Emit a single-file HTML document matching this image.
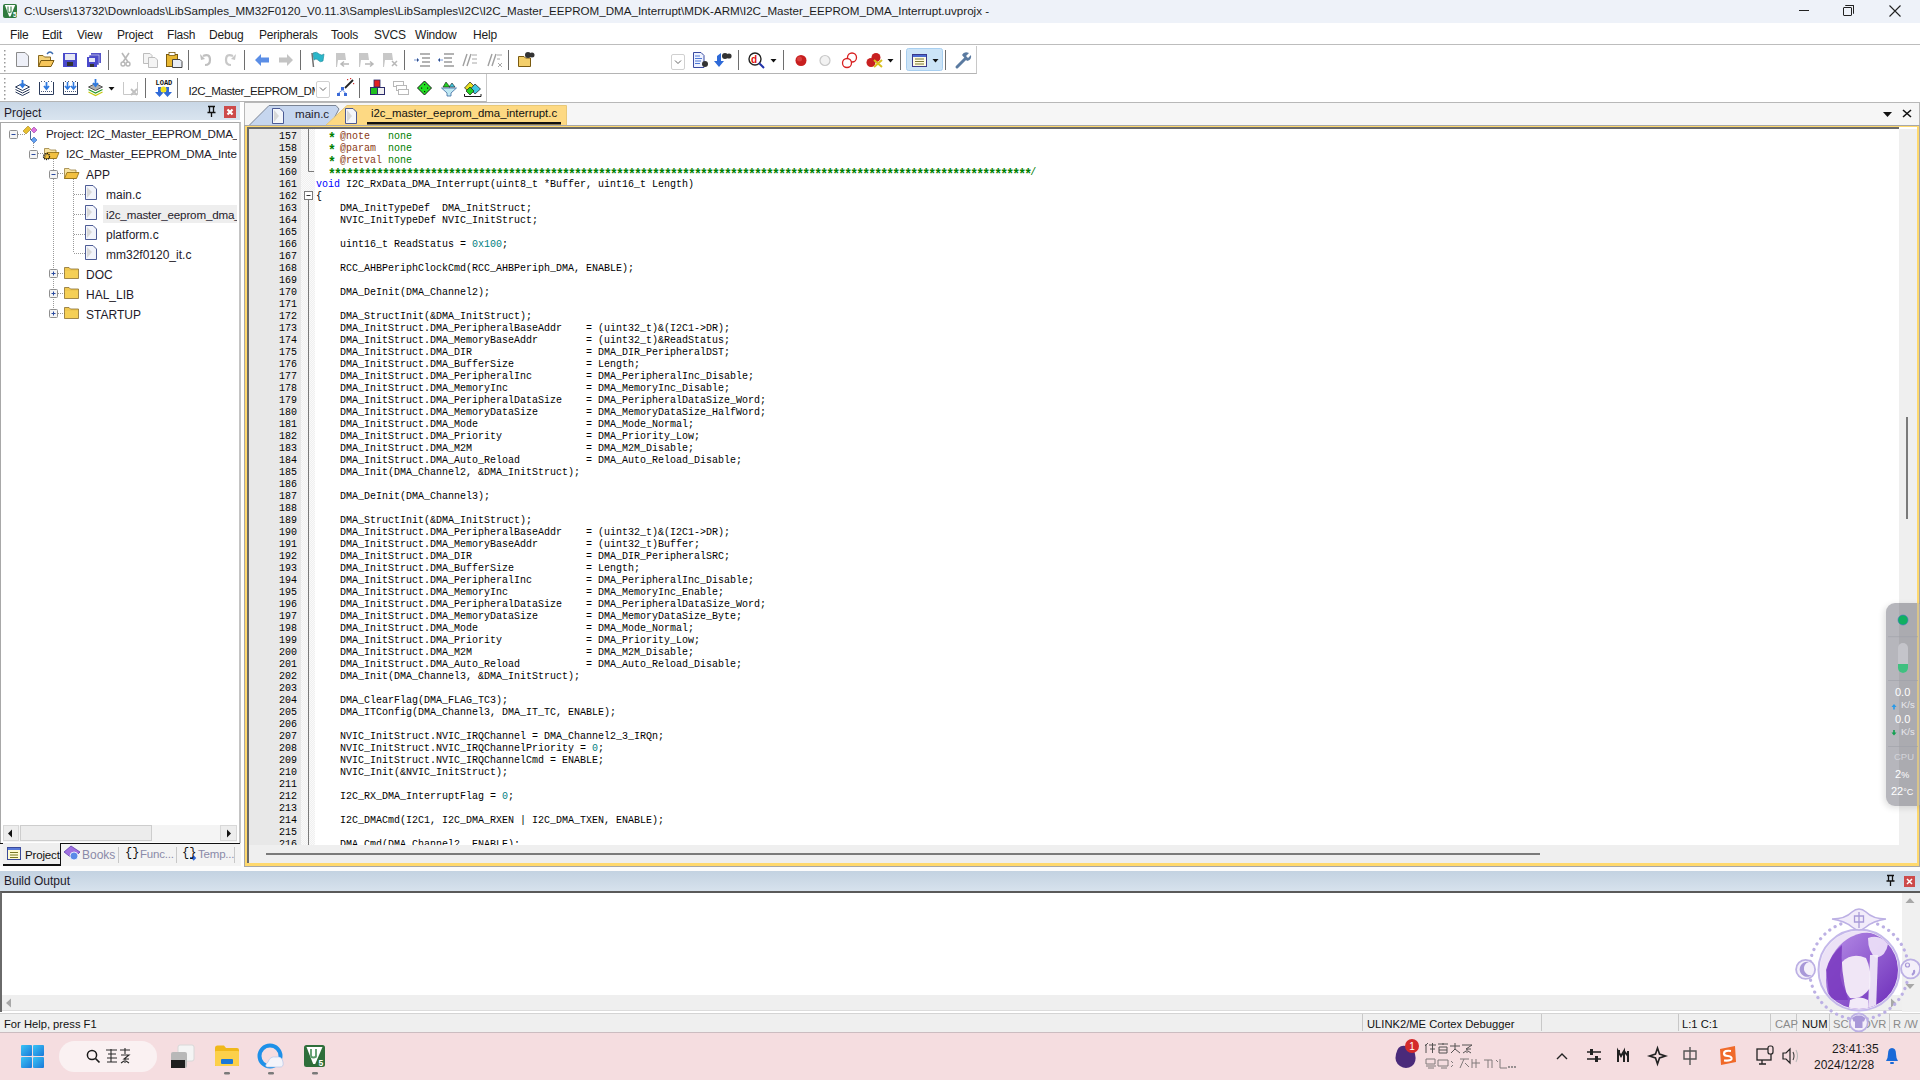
<!DOCTYPE html>
<html><head><meta charset="utf-8">
<style>
*{margin:0;padding:0;box-sizing:border-box}
html,body{width:1920px;height:1080px;overflow:hidden;background:#fff;font-family:"Liberation Sans",sans-serif;font-size:11.5px;color:#1b1b1b}
.a{position:absolute}
#title{left:0;top:0;width:1920px;height:23px;background:#eef2f9}
#title .t{left:24px;top:4px;font-size:11.6px;white-space:nowrap;color:#1c1c1c}
#menu{left:0;top:23px;width:1920px;height:22px;background:#fff;border-bottom:1px solid #bdbdbd}
#menu span{position:absolute;top:5px;font-size:12px;letter-spacing:-0.2px;color:#1b1b1b}
.tb{background:#fff}
.sep{position:absolute;width:1px;background:#7a7a7a}
.grip{position:absolute;width:2px;border-left:2px dotted #a0a0a0}
#codeclip{left:249px;top:129px;width:1650px;height:716px;overflow:hidden}
#code{left:66.6px;top:1px;font-family:"Liberation Mono",monospace;font-size:11.5px;line-height:12px;white-space:pre;transform:scaleX(0.8696);transform-origin:0 0;color:#000}
#nums{left:0px;top:1px;width:48px;text-align:right;font-family:"Liberation Mono",monospace;font-size:11.5px;line-height:12px;color:#000;transform:scaleX(0.8696);transform-origin:100% 0}
.cl{height:12px}
.cm{color:#008000}.st{font-size:15px;letter-spacing:-2.1px;position:relative;top:3.5px;font-weight:bold}.tg{color:#8b3a16}.kw{color:#0000ff}.nm{color:#008080}
</style></head><body>
<!-- title bar -->
<div id="title" class="a">
  <svg class="a" style="left:3px;top:4px" width="14" height="14" viewBox="0 0 14 14"><rect x="0" y="0" width="14" height="14" rx="2" fill="#2f7a3e"/><path d="M1.8 1 H12.2 L7.5 12.5 H6.2Z" fill="#fff"/><path d="M5 2.5 V7 Q5 8.5 6.5 8.5 Q8 8.5 8 7 V2.5 M8 2.5 V8.5" stroke="#5a9a68" stroke-width="1.3" fill="none"/><text x="10" y="13.3" font-size="6.5" fill="#fff" font-family="Liberation Sans" font-weight="bold">5</text></svg>
  <div class="a t">C:\Users\13732\Downloads\LibSamples_MM32F0120_V0.11.3\Samples\LibSamples\I2C\I2C_Master_EEPROM_DMA_Interrupt\MDK-ARM\I2C_Master_EEPROM_DMA_Interrupt.uvprojx -</div>
  <div class="a" style="left:1799px;top:10px;width:10px;height:1px;background:#222"></div>
  <div class="a" style="left:1843px;top:7px;width:9px;height:9px;border:1px solid #222;border-radius:1px"></div>
  <div class="a" style="left:1845px;top:5px;width:9px;height:9px;border-top:1px solid #222;border-right:1px solid #222;border-radius:1px"></div>
  <svg class="a" style="left:1889px;top:5px" width="12" height="12"><path d="M0.5 0.5 L11.5 11.5 M11.5 0.5 L0.5 11.5" stroke="#222" stroke-width="1.1"/></svg>
</div>
<!-- menu -->
<div id="menu" class="a">
  <span style="left:10px">File</span><span style="left:42px">Edit</span><span style="left:77px">View</span><span style="left:117px">Project</span><span style="left:167px">Flash</span><span style="left:209px">Debug</span><span style="left:259px">Peripherals</span><span style="left:331px">Tools</span><span style="left:374px">SVCS</span><span style="left:415px">Window</span><span style="left:473px">Help</span>
</div>
<!-- toolbar 1 -->
<div class="a" style="left:0;top:46px;width:977px;height:28px;border-right:1px solid #c8c8c8;border-bottom:1px solid #b4b4b4;background:#fff"></div>
<div class="a" style="left:0;top:74px;width:487px;height:28px;border-right:1px solid #c8c8c8;border-bottom:1px solid #b4b4b4;background:#fff"></div>
<svg class="a" style="left:0;top:46px" width="980" height="56">
 <g fill="#9a9a9a">
  <rect x="4" y="4" width="1.5" height="1.5"/><rect x="4" y="8" width="1.5" height="1.5"/><rect x="4" y="12" width="1.5" height="1.5"/><rect x="4" y="16" width="1.5" height="1.5"/><rect x="4" y="20" width="1.5" height="1.5"/><rect x="4" y="24" width="1.5" height="1.5"/>
  <rect x="4" y="32" width="1.5" height="1.5"/><rect x="4" y="36" width="1.5" height="1.5"/><rect x="4" y="40" width="1.5" height="1.5"/><rect x="4" y="44" width="1.5" height="1.5"/><rect x="4" y="48" width="1.5" height="1.5"/><rect x="4" y="52" width="1.5" height="1.5"/>
 </g>
 <!-- separators row1 -->
 <g fill="#6e6e6e">
  <rect x="108" y="4" width="1" height="20"/><rect x="188" y="4" width="1" height="20"/><rect x="244" y="4" width="1" height="20"/><rect x="300" y="4" width="1" height="20"/><rect x="404" y="4" width="1" height="20"/><rect x="508" y="4" width="1" height="20"/><rect x="738" y="4" width="1" height="20"/><rect x="783" y="4" width="1" height="20"/><rect x="900" y="4" width="1" height="20"/><rect x="945" y="4" width="1" height="20"/>
  <rect x="145" y="32" width="1" height="20"/><rect x="177" y="32" width="1" height="20"/><rect x="359" y="32" width="1" height="20"/>
 </g>
 <!-- new file -->
 <path d="M16.5 6.5 H25 L28.5 10 V20.5 H16.5Z" fill="#eef0f8" stroke="#8a8a8a"/>
 <!-- open -->
 <path d="M38.5 9.5 H43 L44.5 11 H50.5 V20.5 H38.5Z" fill="#f3d27a" stroke="#8a6a20"/>
 <path d="M38.5 20.5 L41 14.5 H54 L51 20.5Z" fill="#f7c65a" stroke="#7a5a10"/>
 <path d="M47 8 Q50 4 53 8" fill="none" stroke="#3a6ab0" stroke-width="1.3"/>
 <!-- save -->
 <rect x="63" y="7" width="14" height="14" fill="#4a4acb"/><rect x="65" y="8" width="10" height="6" fill="#e6e8f4"/><rect x="67" y="16" width="6" height="4" fill="#333"/>
 <!-- save all -->
 <rect x="91" y="7" width="10" height="10" fill="#5555c8"/><rect x="89" y="9" width="10" height="10" fill="#4f4fc8" stroke="#fff" stroke-width="0.5"/><rect x="87" y="11" width="10" height="10" fill="#4a4acb"/><rect x="89" y="12" width="6" height="4" fill="#e6e8f4"/><rect x="90" y="18" width="4" height="3" fill="#333"/>
 <!-- cut (gray) -->
 <path d="M122 7 L128 16 M129 7 L123 16" stroke="#b8b8b8" stroke-width="1.6"/><circle cx="123" cy="18" r="2" fill="none" stroke="#b8b8b8" stroke-width="1.4"/><circle cx="128" cy="18" r="2" fill="none" stroke="#b8b8b8" stroke-width="1.4"/>
 <!-- copy (gray) -->
 <path d="M143.5 7.5 H150 L152 9.5 V17.5 H143.5Z" fill="#f4f4f4" stroke="#bdbdbd"/><path d="M148.5 11.5 H155 L157.5 14 V21.5 H148.5Z" fill="#f4f4f4" stroke="#bdbdbd"/>
 <!-- paste -->
 <rect x="166.5" y="8.5" width="11" height="12" fill="#e8b732" stroke="#7a5a10"/><rect x="169" y="6.5" width="6" height="3" fill="#fff" stroke="#7a5a10" stroke-width="0.8"/><path d="M172.5 13.5 H180 L182 15.5 V21.5 H172.5Z" fill="#e9edf5" stroke="#444"/>
 <!-- undo redo gray -->
 <path d="M203 10 Q210 7 210 14 Q210 19 205 19" fill="none" stroke="#c0c0c0" stroke-width="2.2"/><path d="M200 8 L205 13 L201 14Z" fill="#c0c0c0"/>
 <path d="M233 10 Q226 7 226 14 Q226 19 231 19" fill="none" stroke="#c8c8c8" stroke-width="2.2"/><path d="M236 8 L231 13 L235 14Z" fill="#c8c8c8"/>
 <!-- back / forward -->
 <path d="M255 14 L261 8 V11.5 H269 V16.5 H261 V20Z" fill="#5b8ee6"/>
 <path d="M293 14 L287 8 V11.5 H279 V16.5 H287 V20Z" fill="#c4c4c4"/>
 <!-- flag -->
 <path d="M312 7 L313.5 21" stroke="#707070" stroke-width="1.5"/><path d="M313 7 Q317 5 319 8 Q322 10 324 8 L323 15 Q320 17 318 14 Q316 12 314 14Z" fill="#2bb6c9" stroke="#1a8a9a" stroke-width="0.6"/>
 <!-- bookmark grays -->
 <g fill="#c8c8c8"><path d="M336 7 H345 L346 14 H338 L337 21 H336Z"/><path d="M359 7 H368 L369 14 H361 L360 21 H359Z"/><path d="M383 7 H392 L393 14 H385 L384 21 H383Z"/></g>
 <g stroke="#b8b8b8" stroke-width="1.5" fill="none"><path d="M349 18 H341 M344 15.5 L341 18 L344 20.5"/><path d="M365 18 H373 M370 15.5 L373 18 L370 20.5"/><path d="M392 15 L397 20 M397 15 L392 20"/></g>
 <!-- indent / unindent / comment -->
 <g stroke="#9a9a9a" stroke-width="1.3"><path d="M420 8 H430 M422 12 H430 M422 16 H430 M420 20 H430"/><path d="M444 8 H454 M444 12 H452 M444 16 H452 M444 20 H454"/></g>
 <g stroke="#7a9ad8" stroke-width="1"><path d="M414 14 H419 M417 12 L419 14 L417 16"/><path d="M443 14 H438 M440 12 L438 14 L440 16"/></g>
 <g stroke="#a0a0a0" stroke-width="1.4"><path d="M463 20 L467 8 M467 20 L471 8"/><path d="M488 20 L492 8 M492 20 L496 8"/></g>
 <g stroke="#a8a8a8" stroke-width="1"><path d="M472 9 H477 M472 13 H477 M472 17 H477"/><path d="M497 9 H502 M497 13 H500 M498 17 L502 21 M502 17 L498 21"/></g>
 <!-- find in files -->
 <path d="M518.5 10.5 H524 L525.5 12 H530.5 V20.5 H518.5Z" fill="#f4cf6a" stroke="#7a5a10"/><circle cx="528" cy="9" r="3" fill="#333"/><circle cx="532" cy="9" r="2.5" fill="#333"/>
 <!-- combo dropdown -->
 <rect x="671.5" y="8.5" width="13" height="15" rx="1.5" fill="#fff" stroke="#d0d0d0"/><path d="M675 14.5 L678 17.5 L681 14.5" fill="none" stroke="#555" stroke-width="0.9"/>
 <!-- find doc -->
 <path d="M693.5 6.5 H701 L704 9.5 V21.5 H693.5Z" fill="#eef2ff" stroke="#3a4aa0"/><g stroke="#3a6ad0" stroke-width="0.9"><path d="M695 10 H700 M695 12.5 H702 M695 15 H701 M695 17.5 H700"/></g><circle cx="705" cy="18" r="3" fill="#333"/>
 <!-- find with arrow -->
 <path d="M721 7 V15 H724 L719 21 L714 15 H717 V10Z" fill="#2e6ad8"/><circle cx="725" cy="10" r="3" fill="#333"/><circle cx="729" cy="10" r="2.6" fill="#333"/>
 <!-- debug magnifier -->
 <circle cx="755" cy="13" r="6" fill="#fff" stroke="#222" stroke-width="1.4"/><path d="M759 17 L764 22" stroke="#2233aa" stroke-width="2"/><text x="751" y="17" font-size="10" font-weight="bold" fill="#e01010" font-family="Liberation Sans">d</text>
 <path d="M770.5 13 H776.5 L773.5 16.5Z" fill="#111"/>
 <!-- breakpoints -->
 <circle cx="801" cy="14.5" r="5.5" fill="#c81f1f"/><circle cx="799.5" cy="13" r="2.5" fill="#e65555" opacity="0.6"/>
 <circle cx="825" cy="14.5" r="5" fill="#f2f2f2" stroke="#c8c8c8" stroke-width="1.2"/>
 <circle cx="852" cy="11.5" r="4.5" fill="#fff" stroke="#d82020" stroke-width="1.3"/><circle cx="847" cy="17" r="4.5" fill="#fff" stroke="#d82020" stroke-width="1.3"/>
 <circle cx="876" cy="11.5" r="4.5" fill="#c82020"/><circle cx="871" cy="16.5" r="4.5" fill="#c82020"/><path d="M874 14 L882 21 M882 14 L874 21" stroke="#d8c020" stroke-width="2"/>
 <path d="M887.5 13 H893.5 L890.5 16.5Z" fill="#111"/>
 <!-- highlighted window btn -->
 <rect x="906.5" y="2.5" width="36" height="22" rx="2" fill="#cce4f7" stroke="#a8cff0"/>
 <rect x="912.5" y="8.5" width="14" height="12" fill="#fffbe0" stroke="#3a3a8a"/><rect x="913" y="9" width="13" height="2" fill="#4a6ad0"/><g stroke="#6a6a20" stroke-width="0.9"><path d="M915 13 H924 M915 15.5 H924 M915 18 H924"/></g>
 <path d="M932.5 13 H938.5 L935.5 16.5Z" fill="#111"/>
 <!-- wrench -->
 <path d="M957 21 L965 13" stroke="#5a7aa0" stroke-width="3" stroke-linecap="round"/><path d="M962 9 Q964 5 969 7 L966 10 L968 12 L971 9 Q972 14 967 15Z" fill="#5a7aa0"/>
 <!-- ===== row 2 (y offset 28) ===== -->
 <g transform="translate(0,28)">
  <!-- translate -->
  <path d="M15.5 13 L22.5 9.5 L29.5 13 L22.5 16.5Z" fill="#fff" stroke="#2a3a5a"/><path d="M15.5 15.5 L22.5 19 L29.5 15.5 M15.5 18 L22.5 21.5 L29.5 18" fill="none" stroke="#2a3a5a"/><path d="M22.5 6 V12 M20 10 L22.5 13 L25 10" stroke="#2f7ae0" stroke-width="1.8" fill="none"/>
  <!-- build -->
  <path d="M39.5 8 V20.5 H53.5 V8" fill="none" stroke="#2a3a5a"/><g fill="#4a5a7a"><rect x="41" y="17" width="1" height="1"/><rect x="43" y="17" width="1" height="1"/><rect x="45" y="17" width="1" height="1"/><rect x="47" y="17" width="1" height="1"/><rect x="49" y="17" width="1" height="1"/><rect x="51" y="17" width="1" height="1"/><rect x="41" y="7" width="1" height="1"/><rect x="44" y="7" width="1" height="1"/><rect x="48" y="7" width="1" height="1"/><rect x="51" y="7" width="1" height="1"/></g><path d="M46.5 8 V14 M44 12 L46.5 15 L49 12" stroke="#2f7ae0" stroke-width="1.8" fill="none"/>
  <!-- rebuild -->
  <path d="M63.5 8 V20.5 H77.5 V8" fill="none" stroke="#2a3a5a"/><g fill="#4a5a7a"><rect x="65" y="17" width="1" height="1"/><rect x="67" y="17" width="1" height="1"/><rect x="69" y="17" width="1" height="1"/><rect x="71" y="17" width="1" height="1"/><rect x="73" y="17" width="1" height="1"/><rect x="75" y="17" width="1" height="1"/><rect x="65" y="7" width="1" height="1"/><rect x="68" y="7" width="1" height="1"/><rect x="72" y="7" width="1" height="1"/><rect x="75" y="7" width="1" height="1"/></g><path d="M67.5 8 V14 M65 12 L67.5 15 L70 12 M73.5 8 V14 M71 12 L73.5 15 L76 12" stroke="#2f7ae0" stroke-width="1.6" fill="none"/>
  <!-- batch build -->
  <path d="M88.5 13 L95.5 9.5 L102.5 13 L95.5 16.5Z" fill="#b0b0b0" stroke="#555"/><path d="M88.5 15.5 L95.5 19 L102.5 15.5" fill="none" stroke="#2a9a2a" stroke-width="1.2"/><path d="M88.5 18 L95.5 21.5 L102.5 18" fill="none" stroke="#c8c810" stroke-width="1.2"/><path d="M95.5 5 V11 M93 9 L95.5 12 L98 9" stroke="#2f7ae0" stroke-width="1.8" fill="none"/>
  <path d="M108.5 13 H114.5 L111.5 16.5Z" fill="#111"/>
  <!-- stop build gray -->
  <path d="M123.5 8 V20.5 H137.5 V8" fill="none" stroke="#c8c8c8"/><path d="M131 15 L137 21 M137 15 L131 21" stroke="#c0c0c0" stroke-width="1.8"/>
  <!-- LOAD -->
  <text x="155.5" y="11" font-size="7" font-weight="bold" fill="#111" font-family="Liberation Mono">LOAD</text>
  <path d="M158 13 V18 H155 L159.5 23 L164 18 H161 V13Z" fill="#2f6ad8"/><path d="M166 13 V18 H163 L167.5 23 L172 18 H169 V13Z" fill="#2f6ad8"/><circle cx="163.5" cy="15.5" r="3" fill="#f0e020"/>
  <!-- combo -->
  <clipPath id="cb"><rect x="186" y="0" width="129" height="28"/></clipPath><text x="188.5" y="21" font-size="11.6" letter-spacing="-0.45" fill="#1a1a1a" font-family="Liberation Sans" clip-path="url(#cb)">I2C_Master_EEPROM_DMA_Interrupt</text>
  <rect x="316.5" y="7.5" width="13" height="16" rx="1.5" fill="#fff" stroke="#d0d0d0"/><path d="M320 13.5 L323 16.5 L326 13.5" fill="none" stroke="#555" stroke-width="0.9"/>
  <!-- wand -->
  <path d="M345 14 L353 6" stroke="#222" stroke-width="1.8"/><g fill="#d03030"><rect x="350" y="4" width="1.2" height="1.2"/><rect x="353" y="9" width="1.2" height="1.2"/><rect x="347" y="5" width="1.2" height="1.2"/></g><g fill="#3a6ad8"><rect x="341" y="13" width="3" height="3"/><rect x="337" y="19" width="3" height="3"/><rect x="344" y="19" width="3" height="3"/></g><path d="M342.5 16 L338.5 19 M342.5 16 L345.5 19" stroke="#3a6ad8" stroke-width="0.8"/>
  <!-- blocks -->
  <rect x="374" y="6" width="6" height="7" fill="#e02020" stroke="#2a2a6a" stroke-width="0.8"/><rect x="370.5" y="13.5" width="7" height="7" fill="#20c020" stroke="#2a2a6a"/><rect x="377.5" y="13.5" width="7" height="7" fill="#f0f0f0" stroke="#2a2a6a"/>
  <!-- manage gray -->
  <g fill="#fff" stroke="#b8b8b8"><rect x="393.5" y="7.5" width="10" height="5"/><rect x="396.5" y="11.5" width="10" height="5"/><rect x="398.5" y="15.5" width="10" height="5"/></g>
  <!-- green diamond -->
  <path d="M424.5 7 L431.5 14 L424.5 21 L417.5 14Z" fill="#20e020" stroke="#1a1a1a"/><g fill="#111"><rect x="424" y="10" width="1.2" height="1.2"/><rect x="421" y="13.5" width="1.2" height="1.2"/><rect x="427" y="13.5" width="1.2" height="1.2"/><rect x="424" y="17" width="1.2" height="1.2"/></g>
  <!-- funnel -->
  <path d="M441.5 14 H456.5 L451 19 V22 H447 V19Z" fill="#bfe8f4" stroke="#3a6aa0" stroke-width="0.8"/><path d="M443 13 L446 8 L450 13Z" fill="#20d020" stroke="#1a1a1a" stroke-width="0.6"/><path d="M449 13 L452 9 L455 13Z" fill="#40c8e0" stroke="#1a1a1a" stroke-width="0.6"/>
  <!-- packs -->
  <path d="M464.5 14 L470 8 L475 13 L470 18Z" fill="#e8e020" stroke="#1a1a1a" stroke-width="0.7"/><path d="M470.5 15 L475 10 L480.5 15 L475 20Z" fill="#40c8e0" stroke="#1a1a1a" stroke-width="0.7"/><path d="M466 17 L470 13 L474 17 L470 21Z" fill="#20d020" stroke="#1a1a1a" stroke-width="0.7"/><path d="M464.5 20 V22.5 H481 V20" fill="none" stroke="#1a1a1a"/>
 </g>
</svg>

<!-- left panel -->
<!-- left panel header -->
<div class="a" style="left:0;top:102px;width:240px;height:18px;background:linear-gradient(#c9d7e6,#d9e4ef)"></div>
<div class="a" style="left:4px;top:106px;font-size:12px;color:#1e1a2a">Project</div>
<svg class="a" style="left:205px;top:104px" width="36" height="16">
 <path d="M3 2.5 H10 M4.5 2.5 V8.5 H8.5 V2.5 M2.5 8.5 H10.5 M6.5 8.5 V13" stroke="#111" stroke-width="1.3" fill="none"/>
 <rect x="19" y="2" width="12" height="12" fill="#cd4a4a"/>
 <path d="M22.5 5.5 L27.5 10.5 M27.5 5.5 L22.5 10.5" stroke="#fff" stroke-width="2.2"/>
</svg>
<div class="a" style="left:0;top:120px;width:244px;height:3px;background:#ffffff"></div>
<!-- tree frame -->
<div class="a" style="left:0;top:122px;width:241px;height:722px;border:1px solid #a8a8a8;border-right:2px solid #c4c4c4;background:#fff;overflow:hidden">
</div>
<div class="a" style="left:103px;top:205px;width:134px;height:18px;background:#eeeeee"></div>
<svg class="a" style="left:0;top:122px" width="240" height="210">
 <g stroke="#9a9a9a" stroke-width="1" stroke-dasharray="1 1" fill="none">
  <path d="M18 12.5 H25"/><path d="M33.5 17 V27"/><path d="M38 31.5 H45"/><path d="M53.5 37 V191"/><path d="M58 51.5 H65"/>
  <path d="M73.5 57 V131"/><path d="M74 72.5 H85 M74 92.5 H85 M74 112.5 H85 M74 131.5 H85"/>
  <path d="M58 151.5 H65 M58 171.5 H65 M58 191.5 H65"/>
 </g>
 <!-- minus/plus boxes -->
 <g fill="#f4f4f4" stroke="#8f8f8f">
  <rect x="9.5" y="8.5" width="8" height="8" rx="1"/><rect x="29.5" y="28.5" width="8" height="8" rx="1"/><rect x="49.5" y="48.5" width="8" height="8" rx="1"/>
  <rect x="49.5" y="147.5" width="8" height="8" rx="1"/><rect x="49.5" y="167.5" width="8" height="8" rx="1"/><rect x="49.5" y="187.5" width="8" height="8" rx="1"/>
 </g>
 <g stroke="#2a4aa0" stroke-width="1">
  <path d="M11.5 12.5 H15.5 M31.5 32.5 H35.5 M51.5 52.5 H55.5 M51.5 151.5 H55.5 M51.5 171.5 H55.5 M51.5 191.5 H55.5"/>
  <path d="M53.5 149.5 V153.5 M53.5 169.5 V173.5 M53.5 189.5 V193.5"/>
 </g>
 <!-- project icon -->
 <path d="M23 9 L28 4 L31 7 L26 12Z" fill="#e8c030" stroke="#a08020" stroke-width="0.6"/>
 <path d="M31 8 L34 5 L37 8 L34 11Z" fill="#e070e0" stroke="#9040a0" stroke-width="0.6"/>
 <path d="M31 18 L34 15 L37 18 L34 21Z" fill="#60a0f0" stroke="#3060b0" stroke-width="0.6"/>
 <path d="M30.5 9 V17.5 H32" fill="none" stroke="#3a5a8a" stroke-width="0.9"/>
 <!-- open folders -->
 <path d="M44.5 26.5 H49 L50.5 28 H56 V36.5 H44.5Z" fill="#f8e3a0" stroke="#9a8040" stroke-width="0.8"/>
 <path d="M44.5 36.5 L47 30.5 H59 L56.5 36.5Z" fill="#f2c040" stroke="#8a6a10" stroke-width="0.8"/>
 <circle cx="46.5" cy="34.5" r="3" fill="none" stroke="#111" stroke-width="1.3" stroke-dasharray="1.2 0.8"/>
 <path d="M64.5 46.5 H69 L70.5 48 H76 V56.5 H64.5Z" fill="#f8e3a0" stroke="#9a8040" stroke-width="0.8"/>
 <path d="M64.5 56.5 L67 50.5 H79 L76.5 56.5Z" fill="#f2c040" stroke="#8a6a10" stroke-width="0.8"/>
 <!-- file icons -->
 <g fill="#f2f4fa" stroke="#3a4a8a" stroke-width="0.9">
  <path d="M85.5 63.5 H93 L96.5 67 V77.5 H85.5Z"/><path d="M85.5 83.5 H93 L96.5 87 V97.5 H85.5Z"/><path d="M85.5 103.5 H93 L96.5 107 V117.5 H85.5Z"/><path d="M85.5 123.5 H93 L96.5 127 V137.5 H85.5Z"/>
 </g>
 <g fill="#d8d8d8"><path d="M87 65 L92 70 L87 76Z"/><path d="M87 85 L92 90 L87 96Z"/><path d="M87 105 L92 110 L87 116Z"/><path d="M87 125 L92 130 L87 136Z"/></g>
 <!-- closed folders -->
 <g>
  <path d="M64.5 145.5 H69 L70.5 147 H78.5 V156.5 H64.5Z" fill="#f0c850" stroke="#8a7030" stroke-width="0.8"/><rect x="65" y="149" width="13" height="7" fill="#f5cf55"/>
  <path d="M64.5 165.5 H69 L70.5 167 H78.5 V176.5 H64.5Z" fill="#f0c850" stroke="#8a7030" stroke-width="0.8"/><rect x="65" y="169" width="13" height="7" fill="#f5cf55"/>
  <path d="M64.5 185.5 H69 L70.5 187 H78.5 V196.5 H64.5Z" fill="#f0c850" stroke="#8a7030" stroke-width="0.8"/><rect x="65" y="189" width="13" height="7" fill="#f5cf55"/>
 </g>
</svg>
<div class="a tree" style="left:46px;top:127px;font-size:11.6px;letter-spacing:-0.15px;white-space:nowrap;width:191px;overflow:hidden;color:#1e1a2a">Project: I2C_Master_EEPROM_DMA_Interrupt</div>
<div class="a tree" style="left:66px;top:147px;font-size:11.6px;letter-spacing:-0.15px;white-space:nowrap;width:171px;overflow:hidden;color:#1e1a2a">I2C_Master_EEPROM_DMA_Interrupt</div>
<div class="a tree" style="left:86px;top:167.5px;font-size:12px;color:#1e1a2a">APP</div>
<div class="a tree" style="left:106px;top:187.5px;font-size:12px;color:#1e1a2a">main.c</div>
<div class="a tree" style="left:106px;top:207.5px;font-size:11.6px;letter-spacing:-0.15px;white-space:nowrap;width:131px;overflow:hidden;color:#1e1a2a">i2c_master_eeprom_dma_interrupt.c</div>
<div class="a tree" style="left:106px;top:227.5px;font-size:12px;color:#1e1a2a">platform.c</div>
<div class="a tree" style="left:106px;top:247.5px;font-size:12px;color:#1e1a2a">mm32f0120_it.c</div>
<div class="a tree" style="left:86px;top:267.5px;font-size:12px;color:#1e1a2a">DOC</div>
<div class="a tree" style="left:86px;top:287.5px;font-size:12px;color:#1e1a2a">HAL_LIB</div>
<div class="a tree" style="left:86px;top:307.5px;font-size:12px;color:#1e1a2a">STARTUP</div>
<!-- h scrollbar -->
<div class="a" style="left:3px;top:825px;width:234px;height:17px;background:#f4f4f4"></div>
<div class="a" style="left:3px;top:825px;width:16px;height:16px;background:#ededed;border:1px solid #d8d8d8"></div>
<div class="a" style="left:20px;top:825px;width:132px;height:16px;background:#ececec;border:1px solid #cdcdcd"></div>
<div class="a" style="left:220px;top:825px;width:17px;height:16px;background:#ededed;border:1px solid #d8d8d8"></div>
<svg class="a" style="left:0;top:825px" width="240" height="17"><path d="M8 8.5 L12 4.5 V12.5Z" fill="#111"/><path d="M231 8.5 L227 4.5 V12.5Z" fill="#111"/></svg>
<!-- bottom tabs -->
<div class="a" style="left:0;top:843px;width:241px;height:23px;background:#f3f3f3"></div><div class="a" style="left:60px;top:843px;width:180px;height:1px;background:#111"></div><div class="a" style="left:0;top:843px;width:3px;height:1px;background:#111"></div>
<div class="a" style="left:3px;top:843px;width:58px;height:23px;background:#efefef;border-right:1px solid #111;border-bottom:2px solid #111"></div>
<svg class="a" style="left:0;top:843px" width="240" height="23">
 <rect x="7.5" y="4.5" width="13" height="12" fill="#fffbd0" stroke="#3a4a9a"/><rect x="8" y="5" width="12" height="2" fill="#5a7ad8"/><g stroke="#6a6a10" stroke-width="0.9"><path d="M10 9.5 H18 M10 12 H18 M10 14.5 H18"/></g>
 <path d="M64 9 L71 3 L80 9 L73 16Z" fill="#a070e0" stroke="#6040b0" stroke-width="0.8"/><circle cx="74" cy="13" r="4" fill="#5a8ae8" stroke="#fff" stroke-width="0.8"/>
 <rect x="118" y="4" width="1" height="16" fill="#c8c8c8"/><rect x="176" y="4" width="1" height="16" fill="#c8c8c8"/><rect x="234" y="4" width="1" height="16" fill="#c8c8c8"/>
 <path d="M195 15 H190 M192 13 L190 15 L192 17" stroke="#2f6ad8" stroke-width="1.8" fill="none" transform="rotate(180 192.5 15)"/>
</svg>
<div class="a" style="left:25px;top:848px;font-size:11.6px;letter-spacing:-0.2px;color:#111">Project</div>
<div class="a" style="left:82px;top:848px;font-size:12px;color:#8a8aa8">Books</div>
<div class="a" style="left:125px;top:846px;font-size:12px;color:#111;font-family:'Liberation Mono'">{}</div>
<div class="a" style="left:140px;top:848px;font-size:11.5px;letter-spacing:-0.2px;color:#8a8aa8">Func...</div>
<div class="a" style="left:182px;top:846px;font-size:12px;color:#111;font-family:'Liberation Mono'">{}</div>
<div class="a" style="left:198px;top:848px;font-size:11.5px;letter-spacing:-0.2px;color:#8a8aa8">Temp...</div>
<div class="a" style="left:0;top:866px;width:1920px;height:5px;background:#fcfcfc"></div>

<!-- editor -->
<!-- editor tab bar -->
<div class="a" style="left:244px;top:102px;width:1676px;height:24px;background:#f6f6f6;border-left:1px solid #b8b8b8;border-top:1px solid #b8b8b8;border-right:1px solid #b8b8b8"></div>
<svg class="a" style="left:244px;top:102px" width="1676" height="25">
 <path d="M4.5 24 L25 3.5 H92 L95 7 L86 24Z" fill="#c6d6ef" stroke="#7a8494"/>
 <path d="M81 24 L103 3.5 H322.5 V24Z" fill="#fdd983" stroke="#e8c878"/>
 <rect x="123" y="20" width="194" height="2.5" fill="#111"/>
 <g fill="#f4f6fa" stroke="#3a4a8a" stroke-width="0.9"><path d="M28.5 6.5 H36 L39.5 10 V21.5 H28.5Z"/><path d="M101.5 6.5 H109 L112.5 10 V21.5 H101.5Z"/></g>
 <g fill="#d8d8d8"><path d="M30 8 L35 14 L30 20Z"/><path d="M103 8 L108 14 L103 20Z"/></g>
 <path d="M1639 10 H1648 L1643.5 15Z" fill="#111"/>
 <path d="M1659 8 L1667 15 M1667 8 L1659 15" stroke="#111" stroke-width="1.6"/>
</svg>
<div class="a" style="left:295px;top:107px;font-size:11.6px;color:#1e1a2a">main.c</div>
<div class="a" style="left:371px;top:107px;font-size:11.4px;color:#111">i2c_master_eeprom_dma_interrupt.c</div>
<!-- editor frame -->
<div class="a" style="left:244px;top:125px;width:1676px;height:742px;border:1px solid #a8a8a8;background:#ffd96e"></div>
<div class="a" style="left:247px;top:127px;width:1670px;height:736px;background:#fff"></div>
<div class="a" style="left:247px;top:127px;width:1652px;height:2px;background:#6a6a6a"></div>
<div class="a" style="left:247px;top:127px;width:2px;height:718px;background:#6a6a6a"></div>
<div class="a" style="left:249px;top:129px;width:52px;height:716px;background:#e8e8e8"></div>
<div class="a" style="left:301px;top:129px;width:14px;height:716px;background:repeating-conic-gradient(#f0f0f0 0 25%,#fafafa 0 50%) 0 0/2px 2px"></div>
<div class="a" style="left:308px;top:200px;width:1px;height:645px;background:#7a7a7a"></div>
<svg class="a" style="left:300px;top:129px" width="20" height="716">
 <path d="M8.5 0 V42.5 H14" stroke="#7a7a7a" fill="none"/>
 <rect x="4.5" y="62.5" width="8" height="8" fill="#fff" stroke="#7a7a7a"/><path d="M6.5 66.5 H10.5" stroke="#333"/>
</svg>
<!-- v scrollbar -->
<div class="a" style="left:1899px;top:129px;width:18px;height:716px;background:#efefef"></div>
<div class="a" style="left:1906px;top:417px;width:2px;height:102px;background:#7a7a7a"></div>
<!-- h scrollbar -->
<div class="a" style="left:249px;top:845px;width:1668px;height:18px;background:#efefef"></div>
<div class="a" style="left:247px;top:845px;width:2px;height:18px;background:#6a6a6a"></div>
<div class="a" style="left:266px;top:853px;width:1274px;height:2px;background:#7a7a7a"></div>

<div id="codeclip" class="a"><div id="nums" class="a"><div>157</div><div>158</div><div>159</div><div>160</div><div>161</div><div>162</div><div>163</div><div>164</div><div>165</div><div>166</div><div>167</div><div>168</div><div>169</div><div>170</div><div>171</div><div>172</div><div>173</div><div>174</div><div>175</div><div>176</div><div>177</div><div>178</div><div>179</div><div>180</div><div>181</div><div>182</div><div>183</div><div>184</div><div>185</div><div>186</div><div>187</div><div>188</div><div>189</div><div>190</div><div>191</div><div>192</div><div>193</div><div>194</div><div>195</div><div>196</div><div>197</div><div>198</div><div>199</div><div>200</div><div>201</div><div>202</div><div>203</div><div>204</div><div>205</div><div>206</div><div>207</div><div>208</div><div>209</div><div>210</div><div>211</div><div>212</div><div>213</div><div>214</div><div>215</div><div>216</div></div>
<div id="code" class="a"><div class="cl"><span class="cm">  <span class="st">*</span> </span><span class="tg">@note</span><span class="cm">   none</span></div><div class="cl"><span class="cm">  <span class="st">*</span> </span><span class="tg">@param</span><span class="cm">  none</span></div><div class="cl"><span class="cm">  <span class="st">*</span> </span><span class="tg">@retval</span><span class="cm"> none</span></div><div class="cl"><span class="cm">  <span class="st">*********************************************************************************************************************</span>/</span></div><div class="cl"><span class="kw">void</span> I2C_RxData_DMA_Interrupt(uint8_t *Buffer, uint16_t Length)</div><div class="cl">{</div><div class="cl">    DMA_InitTypeDef  DMA_InitStruct;</div><div class="cl">    NVIC_InitTypeDef NVIC_InitStruct;</div><div class="cl"></div><div class="cl">    uint16_t ReadStatus = <span class="nm">0x100</span>;</div><div class="cl"></div><div class="cl">    RCC_AHBPeriphClockCmd(RCC_AHBPeriph_DMA, ENABLE);</div><div class="cl"></div><div class="cl">    DMA_DeInit(DMA_Channel2);</div><div class="cl"></div><div class="cl">    DMA_StructInit(&amp;DMA_InitStruct);</div><div class="cl">    DMA_InitStruct.DMA_PeripheralBaseAddr    = (uint32_t)&amp;(I2C1-&gt;DR);</div><div class="cl">    DMA_InitStruct.DMA_MemoryBaseAddr        = (uint32_t)&amp;ReadStatus;</div><div class="cl">    DMA_InitStruct.DMA_DIR                   = DMA_DIR_PeripheralDST;</div><div class="cl">    DMA_InitStruct.DMA_BufferSize            = Length;</div><div class="cl">    DMA_InitStruct.DMA_PeripheralInc         = DMA_PeripheralInc_Disable;</div><div class="cl">    DMA_InitStruct.DMA_MemoryInc             = DMA_MemoryInc_Disable;</div><div class="cl">    DMA_InitStruct.DMA_PeripheralDataSize    = DMA_PeripheralDataSize_Word;</div><div class="cl">    DMA_InitStruct.DMA_MemoryDataSize        = DMA_MemoryDataSize_HalfWord;</div><div class="cl">    DMA_InitStruct.DMA_Mode                  = DMA_Mode_Normal;</div><div class="cl">    DMA_InitStruct.DMA_Priority              = DMA_Priority_Low;</div><div class="cl">    DMA_InitStruct.DMA_M2M                   = DMA_M2M_Disable;</div><div class="cl">    DMA_InitStruct.DMA_Auto_Reload           = DMA_Auto_Reload_Disable;</div><div class="cl">    DMA_Init(DMA_Channel2, &amp;DMA_InitStruct);</div><div class="cl"></div><div class="cl">    DMA_DeInit(DMA_Channel3);</div><div class="cl"></div><div class="cl">    DMA_StructInit(&amp;DMA_InitStruct);</div><div class="cl">    DMA_InitStruct.DMA_PeripheralBaseAddr    = (uint32_t)&amp;(I2C1-&gt;DR);</div><div class="cl">    DMA_InitStruct.DMA_MemoryBaseAddr        = (uint32_t)Buffer;</div><div class="cl">    DMA_InitStruct.DMA_DIR                   = DMA_DIR_PeripheralSRC;</div><div class="cl">    DMA_InitStruct.DMA_BufferSize            = Length;</div><div class="cl">    DMA_InitStruct.DMA_PeripheralInc         = DMA_PeripheralInc_Disable;</div><div class="cl">    DMA_InitStruct.DMA_MemoryInc             = DMA_MemoryInc_Enable;</div><div class="cl">    DMA_InitStruct.DMA_PeripheralDataSize    = DMA_PeripheralDataSize_Word;</div><div class="cl">    DMA_InitStruct.DMA_MemoryDataSize        = DMA_MemoryDataSize_Byte;</div><div class="cl">    DMA_InitStruct.DMA_Mode                  = DMA_Mode_Normal;</div><div class="cl">    DMA_InitStruct.DMA_Priority              = DMA_Priority_Low;</div><div class="cl">    DMA_InitStruct.DMA_M2M                   = DMA_M2M_Disable;</div><div class="cl">    DMA_InitStruct.DMA_Auto_Reload           = DMA_Auto_Reload_Disable;</div><div class="cl">    DMA_Init(DMA_Channel3, &amp;DMA_InitStruct);</div><div class="cl"></div><div class="cl">    DMA_ClearFlag(DMA_FLAG_TC3);</div><div class="cl">    DMA_ITConfig(DMA_Channel3, DMA_IT_TC, ENABLE);</div><div class="cl"></div><div class="cl">    NVIC_InitStruct.NVIC_IRQChannel = DMA_Channel2_3_IRQn;</div><div class="cl">    NVIC_InitStruct.NVIC_IRQChannelPriority = <span class="nm">0</span>;</div><div class="cl">    NVIC_InitStruct.NVIC_IRQChannelCmd = ENABLE;</div><div class="cl">    NVIC_Init(&amp;NVIC_InitStruct);</div><div class="cl"></div><div class="cl">    I2C_RX_DMA_InterruptFlag = <span class="nm">0</span>;</div><div class="cl"></div><div class="cl">    I2C_DMACmd(I2C1, I2C_DMA_RXEN | I2C_DMA_TXEN, ENABLE);</div><div class="cl"></div><div class="cl">    DMA_Cmd(DMA_Channel2, ENABLE);</div></div></div>
<!-- perf widget -->
<div class="a" style="left:1886px;top:603px;width:40px;height:203px;border-radius:9px;background:#b6b6bc;box-shadow:-2px 2px 6px rgba(0,0,0,0.12)"></div>
<div class="a" style="left:1899px;top:603px;width:21px;height:203px;background:rgba(0,0,0,0.06)"></div><div class="a" style="left:1917px;top:603px;width:2px;height:203px;background:rgba(255,217,110,0.55)"></div>
<svg class="a" style="left:1886px;top:603px" width="34" height="203">
 <circle cx="17" cy="17" r="5" fill="#10b060" stroke="#3a7ac0" stroke-width="0.6"/>
 <rect x="2" y="33.5" width="30" height="0.6" fill="#9ea0a8"/>
 <rect x="12" y="40" width="10" height="30" rx="5" fill="#c4c4ca"/>
 <path d="M12 61 H22 V65 A5 5 0 0 1 12 65Z" fill="#40c080"/>
 <rect x="2" y="77" width="30" height="0.6" fill="#9ea0a8"/>
 <rect x="2" y="143" width="30" height="0.6" fill="#9ea0a8"/>
 <path d="M8 101 L5.5 104 H7.2 V106.5 H8.8 V104 H10.5Z" fill="#2a9ae8"/>
 <path d="M8 132.5 L5.5 129.5 H7.2 V127 H8.8 V129.5 H10.5Z" fill="#10a050"/>
</svg>
<div class="a" style="left:1895px;top:686px;font-size:11px;color:#fff">0.0</div>
<div class="a" style="left:1901px;top:699px;font-size:9.5px;color:#e8e8ec">K/s</div>
<div class="a" style="left:1895px;top:713px;font-size:11px;color:#fff">0.0</div>
<div class="a" style="left:1901px;top:726px;font-size:9.5px;color:#e8e8ec">K/s</div>
<div class="a" style="left:1894px;top:751px;font-size:9.5px;color:#d4d4da">CPU</div>
<div class="a" style="left:1895px;top:768px;font-size:11px;color:#fff">2<span style="font-size:9px">%</span></div>
<div class="a" style="left:1891px;top:785px;font-size:11px;color:#fff">22<span style="font-size:9px">°C</span></div>
<!-- build output -->
<div class="a" style="left:0;top:871px;width:1920px;height:20px;background:linear-gradient(#c3d2e1,#d7e2ed)"></div>
<div class="a" style="left:4px;top:874px;font-size:12px;color:#1e1a2a">Build Output</div>
<svg class="a" style="left:1880px;top:871px" width="40" height="20">
 <path d="M7 4.5 H14 M8.5 4.5 V10 H12.5 V4.5 M6.5 10 H14.5 M10.5 10 V15" stroke="#111" stroke-width="1.3" fill="none"/>
 <rect x="24" y="5" width="11" height="11" fill="#cd4a4a"/>
 <path d="M27 8 L32 13 M32 8 L27 13" stroke="#fff" stroke-width="1.5"/>
</svg>
<div class="a" style="left:0;top:891px;width:1920px;height:121px;background:#fff;border-top:2px solid #5a5a5a;border-left:2px solid #6a6a6a"></div>
<div class="a" style="left:1902px;top:893px;width:18px;height:119px;background:#f0f0f0"></div>
<div class="a" style="left:2px;top:995px;width:1900px;height:16px;background:#efefef;border-bottom:1px solid #dcdcdc"></div>
<svg class="a" style="left:0;top:893px" width="1920" height="120">
 <path d="M6 110 L11 105.5 V114.5Z" fill="#a8a8a8"/>
 <path d="M1910 5 L1905.5 10 H1914.5Z" fill="#a8a8a8"/>
 <path d="M1910 96 L1905.5 91 H1914.5Z" fill="#a8a8a8"/>
 <path d="M1896 110 L1891 105.5 V114.5Z" fill="#a8a8a8"/>
</svg>
<!-- status bar -->
<div class="a" style="left:0;top:1012px;width:1920px;height:20px;background:#efefef;border-top:1px solid #fff"></div><div class="a" style="left:0;top:1013px;width:1920px;height:1px;background:#d4d4d4"></div>
<div class="a" style="left:4px;top:1018px;font-size:11.2px;color:#111">For Help, press F1</div>
<svg class="a" style="left:1350px;top:1013px" width="570" height="19">
 <g fill="#c8c8c8"><rect x="12" y="1" width="1" height="17"/><rect x="191" y="1" width="1" height="17"/><rect x="328" y="1" width="1" height="17"/><rect x="420" y="1" width="1" height="17"/><rect x="446" y="1" width="1" height="17"/><rect x="479" y="1" width="1" height="17"/><rect x="509" y="1" width="1" height="17"/><rect x="539" y="1" width="1" height="17"/></g>
</svg>
<div class="a" style="left:1367px;top:1018px;font-size:11.2px;color:#111">ULINK2/ME Cortex Debugger</div>
<div class="a" style="left:1682px;top:1018px;font-size:11.2px;color:#111">L:1 C:1</div>
<div class="a" style="left:1775px;top:1018px;font-size:11.2px;color:#8a8a8a">CAP</div>
<div class="a" style="left:1802px;top:1018px;font-size:11.2px;color:#111">NUM</div>
<div class="a" style="left:1833px;top:1018px;font-size:11.2px;color:#8a8a8a">SCRL</div>
<div class="a" style="left:1862px;top:1018px;font-size:11.2px;color:#8a8a8a">OVR</div>
<div class="a" style="left:1893px;top:1018px;font-size:11.2px;color:#8a8a8a">R /W</div>
<!-- avatar widget -->
<svg class="a" style="left:1790px;top:900px" width="130" height="135">
 <defs>
  <clipPath id="avc"><circle cx="69" cy="70" r="39"/></clipPath>
  <linearGradient id="hairR" x1="0" y1="0" x2="1" y2="1"><stop offset="0" stop-color="#b890e8"/><stop offset="1" stop-color="#6a2ab8"/></linearGradient>
 </defs>
 <circle cx="69" cy="70" r="49.5" fill="none" stroke="#bcb0e4" stroke-width="3.2" stroke-dasharray="0.1 6.2" stroke-linecap="round"/>
 <circle cx="69" cy="70" r="40.5" fill="#f2ecfa" stroke="#c4b8ea" stroke-width="2"/>
 <g clip-path="url(#avc)">
  <rect x="29" y="30" width="80" height="80" fill="#ece2f6"/>
  <path d="M45 110 Q30 85 40 60 Q50 38 72 33 Q95 30 106 55 Q112 80 104 110Z" fill="url(#hairR)"/>
  <path d="M52 62 Q62 52 76 58 Q82 70 80 88 Q72 100 60 98 Q52 88 50 75Z" fill="#f0e6f6"/>
  <path d="M78 38 Q90 34 98 44 Q96 56 86 58 Q78 52 78 38Z" fill="#efe4fa" opacity="0.9"/>
  <path d="M80 55 L88 55 L86 110 L78 110Z" fill="#f4eefa" opacity="0.9"/>
  <path d="M36 70 Q40 55 52 45 Q50 70 58 100 L40 100Z" fill="#7a3ac0" opacity="0.85"/>
  <path d="M60 100 Q70 95 78 100 L78 112 L58 112Z" fill="#f2eaf8"/>
 </g>
 <path d="M42 19 Q55 19 62 12 Q69 6 76 12 Q83 19 96 19 Q83 21 76 27 Q69 33 62 27 Q55 21 42 19Z" fill="#f2ecfa" stroke="#bcb0e4" stroke-width="1.6"/>
 <path d="M64.5 16 H73.5 V22 H64.5Z M69 12 V28" stroke="#a89ad8" stroke-width="1.3" fill="none"/>
 <circle cx="15.6" cy="69.4" r="9.5" fill="#f4f0fa" stroke="#bcb0e4" stroke-width="1.8"/>
 <path d="M19 62 A7.5 7.5 0 1 0 22 75 A6 6 0 0 1 19 62Z" fill="#a898d8"/>
 <circle cx="120.6" cy="68.8" r="9.5" fill="#f4f0fa" stroke="#bcb0e4" stroke-width="1.8"/>
 <circle cx="117.5" cy="65" r="2" fill="none" stroke="#a898d8" stroke-width="1.2"/><path d="M124 70 Q125 73 122 75" stroke="#a898d8" stroke-width="2" fill="none"/>
 <circle cx="68.8" cy="122.5" r="9" fill="#f4f0fa" stroke="#bcb0e4" stroke-width="1.8"/>
 <path d="M62 118 L66 115.5 H71.5 L75.5 118 L74 121.5 H72.5 V128 H65 V121.5 H63.5Z" fill="#a898d8"/>
</svg>
<!-- taskbar -->
<div class="a" style="left:0;top:1032px;width:1920px;height:48px;background:#f5dde0;border-top:1px solid #cbbcc0"></div>
<svg class="a" style="left:0;top:1032px" width="1920" height="48">
 <defs><linearGradient id="wg" x1="0" y1="0" x2="1" y2="1"><stop offset="0" stop-color="#3ac4f6"/><stop offset="1" stop-color="#1a78d8"/></linearGradient></defs>
 <g fill="url(#wg)"><rect x="21" y="13" width="11" height="11" rx="1"/><rect x="33" y="13" width="11" height="11" rx="1"/><rect x="21" y="25" width="11" height="11" rx="1"/><rect x="33" y="25" width="11" height="11" rx="1"/></g>
 <rect x="59" y="9" width="98" height="31" rx="15.5" fill="#faf1f2"/>
 <circle cx="92" cy="23" r="4.6" fill="none" stroke="#1a1a1a" stroke-width="1.5"/><path d="M95.5 26.5 L99.5 30.5" stroke="#1a1a1a" stroke-width="1.7"/>
 <g stroke="#2a2a2a" stroke-width="1.1" fill="none"><path d="M106 18 H117 M108 22 H116 M107 26 H117 M111 17 V30 M107 30 L117 30"/><path d="M120 18 H130 M125 16 V22 M121 23 H129 L124 27 H129 M125 27 V31 M121 31 L124 29 M129 31 L126 29"/></g>
 <rect x="178" y="13" width="16" height="16" rx="2" fill="#f4f4f4" stroke="#d8d8d8"/><rect x="171" y="20" width="16" height="16" rx="2" fill="#b8b8b8"/><rect x="171" y="28" width="14" height="8" fill="#1e1e1e"/>
 <path d="M215 16 Q215 13.5 217.5 13.5 H224 L226 16 H237 Q239 16 239 18 V34 H215Z" fill="#f0b81a"/><rect x="215" y="19" width="24" height="15" rx="1" fill="#fcd04a"/><rect x="221" y="27" width="12" height="5" rx="1" fill="#1a78d8"/>
 <rect x="224" y="40" width="6" height="2.5" rx="1.2" fill="#7a7a7a"/>
 <circle cx="270" cy="24" r="10.5" fill="none" stroke="#1e90e8" stroke-width="4"/><path d="M268 30 Q270 24 276 25 Q282 24 283 30 Q284 35 280 35 H267 Q264 34 268 30Z" fill="#f4f4fa" stroke="#a8c0e8" stroke-width="0.6"/>
 <rect x="268" y="40" width="6" height="2.5" rx="1.2" fill="#7a7a7a"/>
 <rect x="304" y="13" width="21" height="22" rx="2.5" fill="#2e6e3a"/><path d="M306.5 15 H322.5 L315.2 32 H313.2Z" fill="#fff"/><path d="M311 17 V23.5 Q311 25.5 313.5 25.5 Q316 25.5 316 23.5 V17 M316 17 V25.5" stroke="#5a9a68" stroke-width="1.8" fill="none"/><text x="318.5" y="33.5" font-size="8.5" font-weight="bold" fill="#fff" font-family="Liberation Sans">5</text>
 <rect x="312" y="40" width="6" height="2.5" rx="1.2" fill="#7a7a7a"/>
 <!-- news -->
 <path d="M1396 22 Q1398 12 1406 14 Q1414 12 1415 22 Q1417 30 1412 34 Q1406 38 1400 34 Q1394 30 1396 22Z" fill="#4a2a7a"/>
 <circle cx="1412" cy="14" r="7" fill="#d42a2a"/><text x="1409.2" y="18" font-size="10" fill="#fff" font-family="Liberation Sans">1</text>
 <g stroke="#3a3a3a" stroke-width="1" fill="none" opacity="0.85">
  <path d="M1426 12 V21 M1425 14 L1428 11 M1429 13 H1436 M1432.5 11 V21 M1430 17 H1435"/><path d="M1438 12 H1448 M1443 11 V13 M1439 15 H1447 V21 H1439Z M1439 18 H1447"/><path d="M1450 14 H1460 M1455 11 V17 L1451 21 M1455 17 L1460 21"/><path d="M1462 13 H1472 L1466 17 H1471 M1467 17 V21 M1463 21 L1466 19 M1471 21 L1468 19"/>
 </g>
 <g stroke="#5a5a5a" stroke-width="1" fill="none" opacity="0.75">
  <path d="M1426 27 H1435 V32 H1426Z M1426 34 H1436 M1428 36 H1434"/><path d="M1438 28 H1448 V34 H1438Z M1441 36 L1447 36"/><path d="M1451 29 L1453 31 M1451 35 L1453 33"/><path d="M1460 27 H1469 M1464 27 L1460 36 M1465 31 L1469 35"/><path d="M1472 27 V36 M1476 27 V36 M1472 31 H1480"/><path d="M1484 28 H1492 V36 M1488 28 V36"/><path d="M1496 28 L1498 30 M1500 27 V36 H1507"/>
 </g>
 <g fill="#6a6a6a"><circle cx="1509" cy="35" r="0.9"/><circle cx="1512" cy="35" r="0.9"/><circle cx="1515" cy="35" r="0.9"/></g>
 <!-- tray -->
 <path d="M1557 27 L1562 22 L1567 27" stroke="#222" stroke-width="1.4" fill="none"/>
 <g stroke="#222" stroke-width="1.6"><path d="M1587 20 H1601 M1587 27 H1601"/></g><rect x="1590" y="17" width="3" height="6" fill="#222"/><rect x="1595" y="24" width="3" height="6" fill="#222"/>
 <path d="M1618 30 V19 L1621 24 L1624 19 V30 M1628 19 V30 M1618 19 H1620" stroke="#222" stroke-width="2" fill="none"/><path d="M1624 19 L1628 24" stroke="#222" stroke-width="2"/>
 <path d="M1657.5 16 L1659.5 22 L1665.5 24 L1659.5 26 L1657.5 32 L1655.5 26 L1649.5 24 L1655.5 22Z" fill="none" stroke="#222" stroke-width="1.6"/>
 <path d="M1684 19 H1696 V27 H1684Z M1690 15 V33" stroke="#555" stroke-width="1.4" fill="none"/>
 <path d="M1720 17 L1735 14 L1736 30 L1721 33Z" fill="#f06a2a"/><path d="M1731 19 Q1724 18 1724 21.5 Q1724 24 1728 24 Q1732 24.5 1731.5 27 Q1731 29 1724 28.5" stroke="#fff" stroke-width="2.2" fill="none"/>
 <rect x="1757" y="17" width="14" height="11" fill="none" stroke="#222" stroke-width="1.3"/><path d="M1762 28 V32 M1759 32 H1766" stroke="#222" stroke-width="1.3"/><rect x="1768" y="14" width="5" height="8" rx="2" fill="#f5dde0" stroke="#222" stroke-width="1.2"/>
 <path d="M1783 21 H1786 L1790 17 V31 L1786 27 H1783Z" fill="none" stroke="#222" stroke-width="1.2"/><path d="M1793 20 Q1795 24 1793 28" stroke="#444" stroke-width="1.1" fill="none"/><path d="M1796 18 Q1799 24 1796 30" stroke="#bbb" stroke-width="1.1" fill="none"/>
 <path d="M1886 29 Q1888 26 1888 22 Q1888 16 1892 16 Q1896 16 1896 22 Q1896 26 1898 29Z" fill="#1a6ad8"/><rect x="1890" y="30" width="4" height="2" rx="1" fill="#1a6ad8"/>
</svg>
<div class="a" style="left:1832px;top:1042px;font-size:12px;color:#1a1a1a">23:41:35</div>
<div class="a" style="left:1814px;top:1057.5px;font-size:12px;color:#1a1a1a">2024/12/28</div>

</body></html>
